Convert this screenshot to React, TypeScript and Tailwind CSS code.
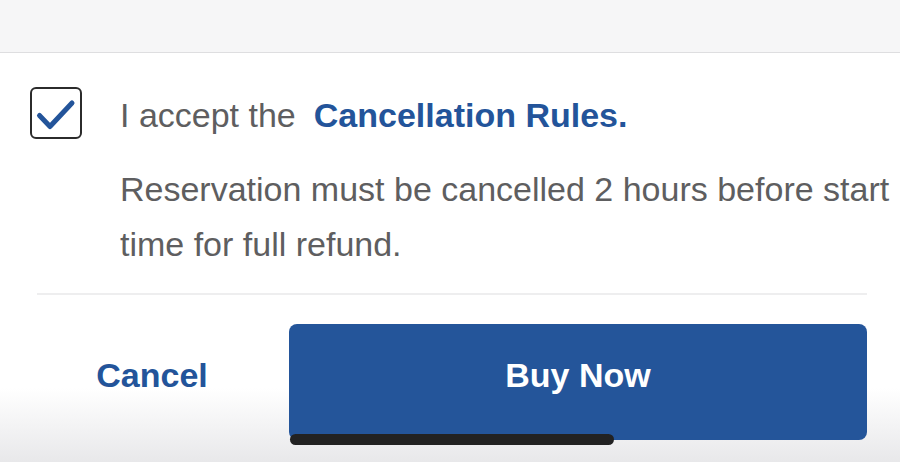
const BLUE = "text-[#23549a]";

function CheckIcon() {
  return (
    <svg viewBox="0 0 52 52" className="size-[52px]" aria-hidden="true">
      <rect x="1" y="1" width="50" height="50" rx="5" fill="none" stroke="#2b2b2b" strokeWidth="2" />
      <path
        d="M9.5 28.5 L20 39.5 L42 16"
        fill="none"
        stroke="#23549a"
        strokeWidth="5"
        strokeLinecap="round"
        strokeLinejoin="round"
      />
    </svg>
  );
}

export default function App() {
  return (
    <div
      className="flex h-[462px] w-[900px] flex-col overflow-hidden bg-[linear-gradient(to_bottom,#ffffff_0%,#ffffff_84%,#e8e8ea_100%)]"
      style={{ fontFamily: '"Liberation Sans", Arial, sans-serif' }}
    >
      {/* top sheet edge */}
      <div className="h-[53px] w-full shrink-0 border-b border-[#dedee0] bg-[#f6f6f7]" />

      {/* accept rules */}
      <div className="flex flex-col pl-[30px] pt-[34px]">
        <div className="flex items-center gap-[38px]">
          <CheckIcon />
          <div className="mt-[4px] flex items-center gap-[18px] text-[34px] leading-none">
            <span className="text-[#5e5e60]">I accept the</span>
            <span className={`font-bold ${BLUE}`}>Cancellation Rules.</span>
          </div>
        </div>
        <p className="ml-[90px] mt-[23px] w-[775px] text-[34px] leading-[55px] text-[#5e5e60]">
          Reservation must be cancelled 2 hours before start time for full refund.
        </p>
      </div>

      <div className="ml-[37px] mt-[21px] h-[2px] w-[830px] bg-[#eeeeef]" />

      {/* actions */}
      <div className="relative mt-[29px] flex items-start">
        <button
          type="button"
          className={`ml-[48px] mt-[28px] w-[208px] text-center text-[34px] leading-[46px] font-bold ${BLUE}`}
        >
          Cancel
        </button>
        <button
          type="button"
          className="ml-[33px] flex h-[116px] w-[578px] items-center justify-center rounded-[8px] bg-[#24559a] pb-[13px] text-[34px] font-bold text-white"
        >
          Buy Now
        </button>
        <div className="absolute left-[290px] top-[110px] h-[11px] w-[324px] rounded-full bg-[#222222]" />
      </div>
    </div>
  );
}
